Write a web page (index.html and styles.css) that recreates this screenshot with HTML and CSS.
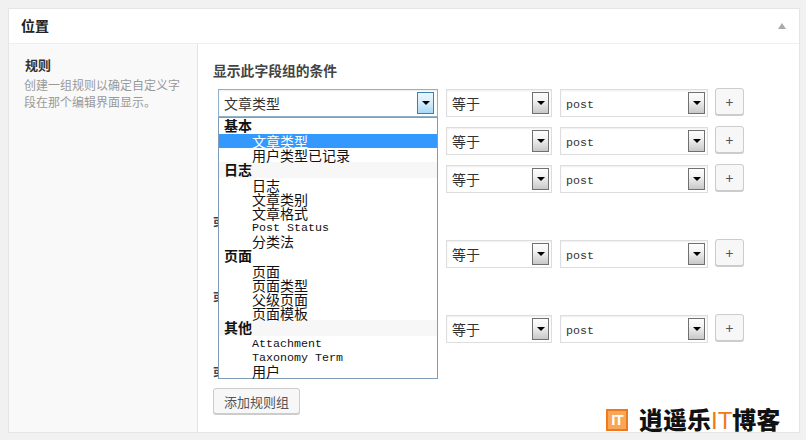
FILE: index.html
```html
<!DOCTYPE html>
<html lang="zh-CN">
<head>
    <meta charset="UTF-8">
    <title>位置</title>
    <link rel="stylesheet" href="styles.css">
</head>
<body>
    <div class="postbox">
        <div class="postbox-head">
            <h2>位置</h2>
            <span class="toggle"></span>
        </div>
        <div class="postbox-body">
            <div class="label-col">
                <h3>规则</h3>
                <p>创建一组规则以确定自定义字段在那个编辑界面显示。</p>
            </div>
            <div class="field-col">
                <h4>显示此字段组的条件</h4>

                <div class="rule-group">
                    <div class="rule-row">
                        <div class="select select-param focused"><span>文章类型</span><i class="arrow"></i></div>
                        <div class="select select-op"><span>等于</span><i class="arrow"></i></div>
                        <div class="select select-val"><span class="latin">post</span><i class="arrow"></i></div>
                        <button class="btn btn-add">+</button>
                    </div>
                    <div class="rule-row">
                        <div class="select select-param"><span>文章类型</span><i class="arrow"></i></div>
                        <div class="select select-op"><span>等于</span><i class="arrow"></i></div>
                        <div class="select select-val"><span class="latin">post</span><i class="arrow"></i></div>
                        <button class="btn btn-add">+</button>
                    </div>
                    <div class="rule-row">
                        <div class="select select-param"><span>文章类型</span><i class="arrow"></i></div>
                        <div class="select select-op"><span>等于</span><i class="arrow"></i></div>
                        <div class="select select-val"><span class="latin">post</span><i class="arrow"></i></div>
                        <button class="btn btn-add">+</button>
                    </div>
                </div>
                <div class="or-label">或</div>

                <div class="rule-group">
                    <div class="rule-row">
                        <div class="select select-param"><span>文章类型</span><i class="arrow"></i></div>
                        <div class="select select-op"><span>等于</span><i class="arrow"></i></div>
                        <div class="select select-val"><span class="latin">post</span><i class="arrow"></i></div>
                        <button class="btn btn-add">+</button>
                    </div>
                </div>
                <div class="or-label">或</div>

                <div class="rule-group">
                    <div class="rule-row">
                        <div class="select select-param"><span>文章类型</span><i class="arrow"></i></div>
                        <div class="select select-op"><span>等于</span><i class="arrow"></i></div>
                        <div class="select select-val"><span class="latin">post</span><i class="arrow"></i></div>
                        <button class="btn btn-add">+</button>
                    </div>
                </div>
                <div class="or-label">或</div>

                <button class="btn btn-group">添加规则组</button>

                <ul class="dropdown">
                    <li class="group">基本</li>
                    <li class="option selected">文章类型</li>
                    <li class="option">用户类型已记录</li>
                    <li class="group shaded">日志</li>
                    <li class="option">日志</li>
                    <li class="option">文章类别</li>
                    <li class="option">文章格式</li>
                    <li class="option latin">Post Status</li>
                    <li class="option">分类法</li>
                    <li class="group">页面</li>
                    <li class="option">页面</li>
                    <li class="option">页面类型</li>
                    <li class="option">父级页面</li>
                    <li class="option">页面模板</li>
                    <li class="group shaded">其他</li>
                    <li class="option latin">Attachment</li>
                    <li class="option latin">Taxonomy Term</li>
                    <li class="option">用户</li>
                </ul>
            </div>
        </div>
    </div>

    <div class="watermark">
        <span class="wm-icon">IT</span>
        <span class="wm-text">逍遥乐<em>IT</em>博客</span>
    </div>
</body>
</html>
```

FILE: styles.css
```css
:root {
    --line: #e5e5e5;
    font-family: "Noto Sans CJK SC", sans-serif;
}

body {
    margin: 8px 6px 7px 8px;
    background-color: #f1f1f1;
    color: #222;
}

.postbox {
    height: 425px;
    box-sizing: border-box;
    background-color: white;
    border: 1px solid var(--line);
    display: flex;
    flex-direction: column;
}

.postbox-head {
    height: 35px;
    box-sizing: border-box;
    flex: none;
    display: flex;
    justify-content: space-between;
    align-items: center;
    padding: 0 13px 2px 12px;
    border-bottom: 1px solid #eee;
}
.postbox-head h2 {
    margin: 0;
    font-size: 14px;
    font-weight: 700;
    color: #222;
}
.toggle {
    width: 0;
    height: 0;
    margin-top: 2px;
    border-left: 4px solid transparent;
    border-right: 4px solid transparent;
    border-bottom: 6px solid #aaa;
}

.postbox-body {
    flex: 1;
    display: flex;
}

.label-col {
    width: 189px;
    flex: none;
    box-sizing: border-box;
    padding: 12px 16px 0 15px;
    background-color: #f9f9f9;
    border-right: 1px solid var(--line);
}
.label-col h3 {
    margin: 0 0 3px 1px;
    font-size: 13px;
    line-height: 17px;
    font-weight: 700;
    color: #333;
}
.label-col p {
    margin: 0;
    font-size: 12px;
    line-height: 17px;
    color: #999;
}

.field-col {
    flex: 1;
    position: relative;
    padding: 17px 0 0 15px;
}
.field-col h4 {
    margin: 0 0 10px;
    font-size: 13.8px;
    line-height: 18px;
    font-weight: 700;
    color: #444;
}

.rule-row {
    display: flex;
    align-items: flex-start;
    height: 28px;
    margin: 0 0 10px 5px;
}

.select {
    box-sizing: border-box;
    height: 28px;
    display: flex;
    justify-content: space-between;
    align-items: center;
    padding: 0 2px 0 5px;
    background-color: white;
    border: 1px solid #ddd;
    box-shadow: inset 0 1px 2px rgba(0, 0, 0, 0.07);
    font-size: 14px;
    color: #333;
}
.select-param { width: 220px; margin-right: 8px; }
.select-op { width: 106px; margin-right: 8px; }
.select-val { width: 148px; margin-right: 7px; }

.latin {
    font-family: "Liberation Mono", monospace;
    font-size: 11.67px;
}
.select .latin {
    padding-top: 3px;
}

.arrow {
    width: 17px;
    height: 22px;
    box-sizing: border-box;
    display: flex;
    justify-content: center;
    padding-top: 8px;
    border: 1px solid #707070;
    background: linear-gradient(#fdfdfd, #f4f4f4 35%, #c8c8c8);
}
.arrow::after {
    content: "";
    width: 0;
    height: 0;
    border-left: 4px solid transparent;
    border-right: 4px solid transparent;
    border-top: 4px solid black;
}

.focused {
    border-color: #8fb0c8;
    padding-right: 3px;
}
.focused .arrow {
    border-color: #3c7fb1;
    background: linear-gradient(#eaf6fd, #d7effc 45%, #a7d9f5);
}

.btn {
    box-sizing: border-box;
    background-color: #f7f7f7;
    border: 1px solid #ccc;
    border-radius: 3px;
    box-shadow: 0 1px 0 #ccc;
    color: #555;
    font-family: inherit;
    font-size: 13px;
    padding: 0;
}
.btn-add {
    width: 29px;
    height: 27px;
    margin-top: -1px;
    font-size: 14px;
    line-height: 22px;
}
.btn-group {
    display: block;
    width: 87px;
    height: 26px;
    margin-top: -2px;
}

.or-label {
    height: 27px;
    margin-bottom: 10px;
    padding-top: 9px;
    box-sizing: border-box;
    font-size: 13px;
    line-height: 18px;
    font-weight: 700;
    color: #444;
}

/* opened list of the first select */
.dropdown {
    position: absolute;
    left: 20px;
    top: 73px;
    width: 220px;
    box-sizing: border-box;
    margin: 0;
    padding: 0;
    list-style: none;
    background-color: white;
    border: 1px solid #7f9db9;
    font-size: 14px;
    color: #111;
}
.dropdown li {
    white-space: nowrap;
}
.dropdown .group {
    height: 16px;
    line-height: 15px;
    padding-left: 5px;
    font-weight: 700;
}
.dropdown .shaded {
    background-color: #f7f7f7;
}
.dropdown .option {
    height: 14px;
    line-height: 14px;
    padding-left: 33px;
}
.dropdown .option.latin {
    line-height: 16px;
    font-size: 11.67px;
}
.dropdown .selected {
    background-color: #3399ff;
    color: white;
}

.watermark {
    position: absolute;
    left: 606px;
    top: 408px;
    display: flex;
    align-items: center;
    gap: 11px;
    height: 24px;
}
.wm-icon {
    width: 22px;
    height: 22px;
    box-sizing: border-box;
    border: 2px solid #ee7a1f;
    background-color: #f9a55a;
    color: white;
    font-family: "Liberation Sans", sans-serif;
    font-size: 15px;
    font-weight: 700;
    line-height: 18px;
    text-align: center;
    letter-spacing: -1px;
}
.wm-text {
    font-size: 24px;
    font-weight: 900;
    line-height: 24px;
    color: #111;
    white-space: nowrap;
}
.wm-text em {
    font-family: "Liberation Sans", sans-serif;
    font-style: normal;
    font-weight: 400;
    color: #ee7a1f;
}
```
